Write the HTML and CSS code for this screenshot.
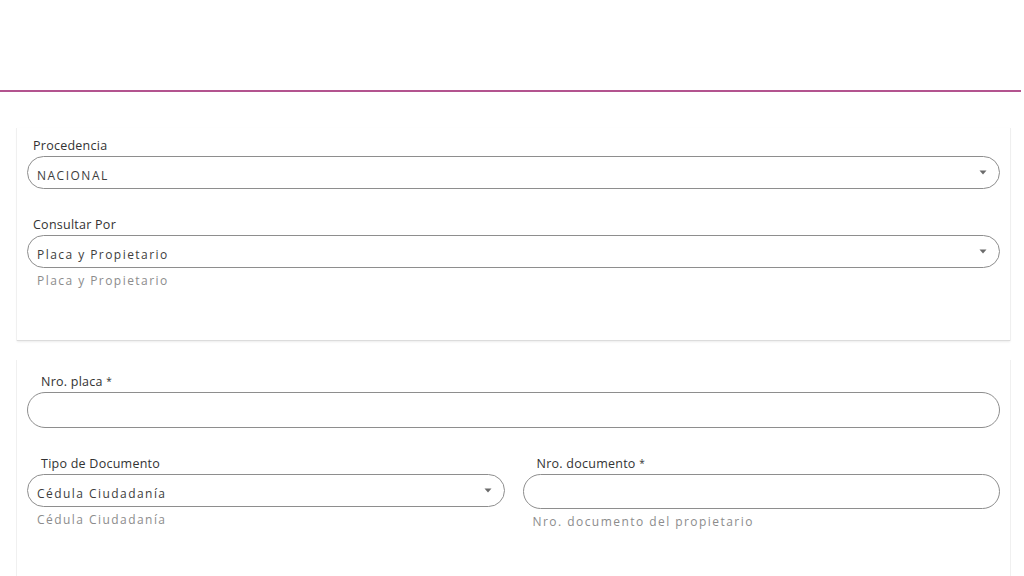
FILE: index.html
```html
<!DOCTYPE html>
<html lang="es">
<head>
<meta charset="utf-8">
<title>Consulta</title>
<link rel="stylesheet" href="styles.css">
</head>
<body>
<div class="header"></div>
<div class="rule"></div>
<main class="page">
  <section class="card card-top">
    <div class="field">
      <label class="label">Procedencia</label>
      <div class="control select">
        <span class="value caps">NACIONAL</span>
        <svg class="caret" width="8" height="5" viewBox="0 0 8 5"><path d="M0.5 0.5h7L4 4.5z" fill="#6b6b6b"/></svg>
      </div>
    </div>
    <div class="field gap">
      <label class="label">Consultar Por</label>
      <div class="control select">
        <span class="value">Placa y Propietario</span>
        <svg class="caret" width="8" height="5" viewBox="0 0 8 5"><path d="M0.5 0.5h7L4 4.5z" fill="#6b6b6b"/></svg>
      </div>
      <div class="hint">Placa y Propietario</div>
    </div>
  </section>

  <section class="card card-bottom">
    <div class="field">
      <label class="label inset">Nro. placa <span class="req">*</span></label>
      <div class="control input tall"></div>
    </div>
    <div class="row gap">
      <div class="field col">
        <label class="label inset">Tipo de Documento</label>
        <div class="control select">
          <span class="value">Cédula Ciudadanía</span>
          <svg class="caret" width="8" height="5" viewBox="0 0 8 5"><path d="M0.5 0.5h7L4 4.5z" fill="#6b6b6b"/></svg>
        </div>
        <div class="hint">Cédula Ciudadanía</div>
      </div>
      <div class="field col">
        <label class="label inset">Nro. documento <span class="req">*</span></label>
        <div class="control input mid"></div>
        <div class="hint">Nro. documento del propietario</div>
      </div>
    </div>
  </section>
</main>
</body>
</html>
```

FILE: styles.css
```css
* { box-sizing: border-box; }
html, body { margin: 0; padding: 0; background: #ffffff; }
body {
  font-family: "Open Sans", "Liberation Sans", sans-serif;
  color: #333333;
  width: 1024px;
  height: 576px;
  overflow: hidden;
}
.header { height: 90px; }
.rule {
  height: 2px;
  width: 1021px;
  background: #b3548f;
}
.page {
  padding: 36px 14px 0 17px;
  display: flex;
  flex-direction: column;
  gap: 19px;
}
.card {
  background: #ffffff;
  padding: 10px 10px 0 10px;
  box-shadow: -1px 0 0 #f0f0f0, 1px 0 0 #f0f0f0;
}
.card-top {
  height: 213px;
  border-bottom: 1px solid #dcdcdc;
  box-shadow: -1px 0 0 #f0f0f0, 1px 0 0 #efefef, 0 1px 2px rgba(0,0,0,0.08);
}
.card-bottom {
  padding-top: 14px;
  height: 240px;
}
.field { display: flex; flex-direction: column; }
.row { display: flex; gap: 18px; }
.col { flex: 1 1 0; }
.field.gap { margin-top: 27px; }
.row.gap { margin-top: 27px; }
.label {
  font-size: 12.5px;
  letter-spacing: 0.25px;
  line-height: 16px;
  height: 16px;
  padding-left: 6px;
  margin-bottom: 2px;
  color: #333333;
}
.gap > .label, .col > .label { margin-top: 1px; }
.label.inset { padding-left: 14px; }
.req { font-size: 10px; line-height: 0; vertical-align: 1px; }
.control {
  border: 1px solid #8e8e8e;
  border-radius: 18px;
  height: 33px;
  display: flex;
  align-items: center;
  padding: 5px 12px 0 9px;
}
.input.tall { height: 36px; }
.input.mid { height: 35px; }
.value {
  flex: 1;
  font-size: 12px;
  letter-spacing: 1.45px;
  color: #3d3d3d;
}
.value.caps { letter-spacing: 1.5px; }
.caret { flex: none; margin-top: -5px; }
.hint {
  font-size: 12px;
  letter-spacing: 1.45px;
  line-height: 16px;
  margin-top: 5px;
  padding-left: 10px;
  color: #8c8c8c;
}
```
